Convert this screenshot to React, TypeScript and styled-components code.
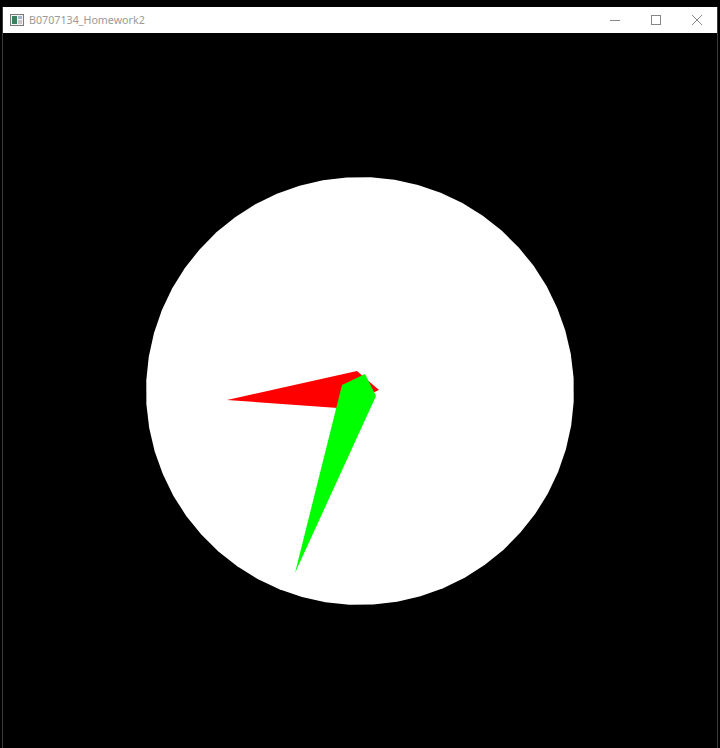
import React from "react";
import styled, { createGlobalStyle } from "styled-components";

const Global = createGlobalStyle`
  html, body { margin: 0; padding: 0; background: #000; }
  body { width: 720px; height: 748px; overflow: hidden; }
`;

const Screen = styled.div`
  width: 720px;
  height: 748px;
  background: #000;
  display: flex;
  flex-direction: column;
  padding-top: 7px;
  box-sizing: border-box;
`;

const Frame = styled.div`
  flex: 1;
  display: flex;
  flex-direction: column;
  margin: 0 2px 0 2px;
  border-left: 1px solid #3a3a3a;
  border-right: 1px solid #3a3a3a;
  min-height: 0;
`;

const TitleBar = styled.div`
  height: 26px;
  background: #fff;
  display: flex;
  align-items: center;
  flex-shrink: 0;
`;

const AppIcon = styled.div`
  width: 16px;
  height: 16px;
  margin-left: 6px;
  display: flex;
  align-items: center;
  justify-content: center;
`;

const Title = styled.span`
  margin-left: 4px;
  font-family: "Segoe UI", "Noto Sans", "Open Sans", sans-serif;
  font-size: 10.7px;
  color: #9a9a9a;
  flex: 1;
`;

const Controls = styled.div`
  display: flex;
  height: 100%;
`;

const CtrlButton = styled.div`
  width: 41px;
  height: 100%;
  display: flex;
  align-items: center;
  justify-content: center;
`;

const Canvas = styled.div`
  flex: 1;
  background: #000;
  min-height: 0;
  svg { display: block; }
`;

function circlePoints(cx: number, cy: number, r: number, n: number) {
  const pts: string[] = [];
  for (let i = 0; i < n; i++) {
    const a = (i / n) * Math.PI * 2 + 0.05;
    pts.push(`${(cx + r * Math.cos(a)).toFixed(1)},${(cy + r * Math.sin(a)).toFixed(1)}`);
  }
  return pts.join(" ");
}

export default function App() {
  return (
    <>
      <Global />
      <Screen>
        <Frame>
          <TitleBar>
            <AppIcon>
              <svg width="14" height="12" viewBox="0 0 14 12">
                <rect x="0.5" y="0.5" width="13" height="11" fill="#f4f4f4" stroke="#7a7a7a" />
                <rect x="2" y="2" width="5" height="8" fill="#3f7f5f" />
                <rect x="8" y="2" width="4" height="3" fill="#9fb8c8" />
                <rect x="8" y="6" width="4" height="4" fill="#c8c8c8" />
              </svg>
            </AppIcon>
            <Title>B0707134_Homework2</Title>
            <Controls>
              <CtrlButton>
                <svg width="10" height="10" viewBox="0 0 10 10">
                  <line x1="0" y1="5.5" x2="10" y2="5.5" stroke="#888" strokeWidth="1" />
                </svg>
              </CtrlButton>
              <CtrlButton>
                <svg width="10" height="10" viewBox="0 0 10 10">
                  <rect x="0.5" y="0.5" width="9" height="9" fill="none" stroke="#888" strokeWidth="1" />
                </svg>
              </CtrlButton>
              <CtrlButton>
                <svg width="10" height="10" viewBox="0 0 10 10">
                  <path d="M0 0 L10 10 M10 0 L0 10" stroke="#888" strokeWidth="1" />
                </svg>
              </CtrlButton>
            </Controls>
          </TitleBar>
          <Canvas>
            <svg width="714" height="715" viewBox="3 33 714 715">
              <polygon points={circlePoints(360, 391, 214, 56)} fill="#fff" />
              <polygon points="227,400 357,371 379,390 338,408" fill="#ff0000" />
              <polygon points="342,385 365,374 376,396 295,573" fill="#00ff00" />
            </svg>
          </Canvas>
        </Frame>
      </Screen>
    </>
  );
}
